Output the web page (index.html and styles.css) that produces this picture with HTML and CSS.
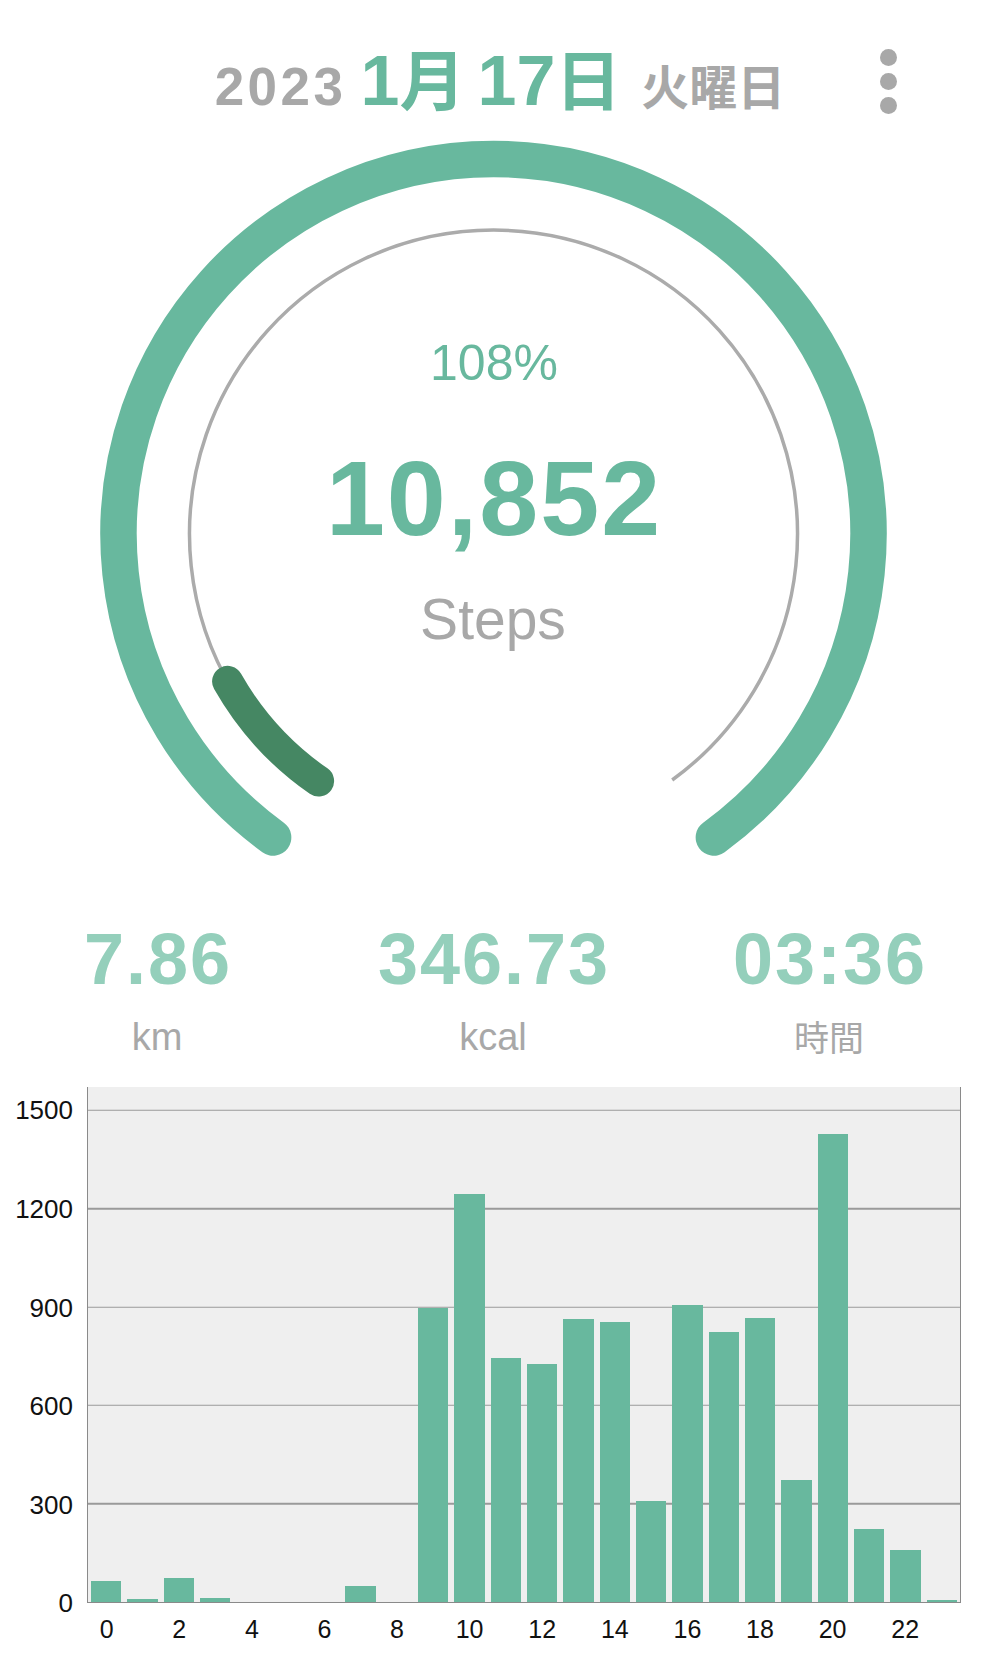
FILE: index.html
```html
<!DOCTYPE html>
<html lang="ja">
<head>
<meta charset="utf-8">
<title>Steps</title>
<link rel="stylesheet" href="styles.css">
</head>
<body>
<header class="header">
  <div class="date">
    <span class="year">2023</span>
    <span class="md"><span class="dn">1</span><span class="dk">月</span></span>
    <span class="md"><span class="dn">17</span><span class="dk">日</span></span>
    <span class="weekday">火曜日</span>
  </div>
  <button class="kebab" aria-label="menu"><i></i><i></i><i></i></button>
</header>

<section class="gauge">
  <svg class="gauge-svg" width="986" height="760" viewBox="0 0 986 760">
    <path d="M 273.1 707.4 A 375 375 0 1 1 713.9 707.4" fill="none" stroke="#68b89e" stroke-width="36.5" stroke-linecap="round"/>
    <path d="M 314.8 650 A 304 304 0 1 1 672.2 650" fill="none" stroke="#ababab" stroke-width="3.5"/>
    <path d="M 318.6 651.1 A 304 304 0 0 1 227.6 551.4" fill="none" stroke="#458763" stroke-width="31" stroke-linecap="round"/>
  </svg>
  <div class="gauge-text">
    <div class="pct">108%</div>
    <div class="steps">10,852</div>
    <div class="unit">Steps</div>
  </div>
</section>

<section class="stats">
  <div class="stat"><div class="val">7.86</div><div class="lbl">km</div></div>
  <div class="stat"><div class="val">346.73</div><div class="lbl">kcal</div></div>
  <div class="stat"><div class="val">03:36</div><div class="lbl cjk">時間</div></div>
</section>

<section class="chart">
  <div class="yaxis">
    <span class="ylab" style="bottom:95.45%">1500</span>
    <span class="ylab" style="bottom:76.36%">1200</span>
    <span class="ylab" style="bottom:57.27%">900</span>
    <span class="ylab" style="bottom:38.18%">600</span>
    <span class="ylab" style="bottom:19.09%">300</span>
    <span class="ylab" style="bottom:0%">0</span>
  </div>
  <div class="plot">
    <div class="grid" style="bottom:95.45%"></div>
    <div class="grid" style="bottom:76.36%"></div>
    <div class="grid" style="bottom:57.27%"></div>
    <div class="grid" style="bottom:38.18%"></div>
    <div class="grid" style="bottom:19.09%"></div>
    <div class="bars">
      <div class="slot"><div class="bar" style="height:4.14%"></div></div>
      <div class="slot"><div class="bar" style="height:0.51%"></div></div>
      <div class="slot"><div class="bar" style="height:4.65%"></div></div>
      <div class="slot"><div class="bar" style="height:0.70%"></div></div>
      <div class="slot"><div class="bar" style="height:0%"></div></div>
      <div class="slot"><div class="bar" style="height:0%"></div></div>
      <div class="slot"><div class="bar" style="height:0%"></div></div>
      <div class="slot"><div class="bar" style="height:3.05%"></div></div>
      <div class="slot"><div class="bar" style="height:0%"></div></div>
      <div class="slot"><div class="bar" style="height:57.08%"></div></div>
      <div class="slot"><div class="bar" style="height:79.31%"></div></div>
      <div class="slot"><div class="bar" style="height:47.30%"></div></div>
      <div class="slot"><div class="bar" style="height:46.15%"></div></div>
      <div class="slot"><div class="bar" style="height:55.00%"></div></div>
      <div class="slot"><div class="bar" style="height:54.36%"></div></div>
      <div class="slot"><div class="bar" style="height:19.67%"></div></div>
      <div class="slot"><div class="bar" style="height:57.67%"></div></div>
      <div class="slot"><div class="bar" style="height:52.39%"></div></div>
      <div class="slot"><div class="bar" style="height:55.13%"></div></div>
      <div class="slot"><div class="bar" style="height:23.68%"></div></div>
      <div class="slot"><div class="bar" style="height:90.91%"></div></div>
      <div class="slot"><div class="bar" style="height:14.19%"></div></div>
      <div class="slot"><div class="bar" style="height:10.18%"></div></div>
      <div class="slot"><div class="bar" style="height:0.45%"></div></div>
    </div>
  </div>
  <div class="xcorner"></div>
  <div class="xaxis">
    <span>0</span><span></span><span>2</span><span></span><span>4</span><span></span>
    <span>6</span><span></span><span>8</span><span></span><span>10</span><span></span>
    <span>12</span><span></span><span>14</span><span></span><span>16</span><span></span>
    <span>18</span><span></span><span>20</span><span></span><span>22</span><span></span>
  </div>
</section>
</body>
</html>
```
FILE: styles.css
```css
* { box-sizing: border-box; }
html, body {
  margin: 0;
  padding: 0;
  background: #ffffff;
}
body {
  width: 986px;
  font-family: "Liberation Sans", "Noto Sans CJK JP", sans-serif;
  color: #111;
}

/* ---------- header ---------- */
.header {
  position: relative;
  height: 130px;
  padding-top: 43px;
}
.date {
  display: flex;
  justify-content: center;
  align-items: baseline;
  line-height: 1;
  font-weight: bold;
  padding-left: 14px;
}
.year {
  font-size: 53px;
  letter-spacing: 3.5px;
  color: #a8a8a8;
  margin-right: 14px;
}
.md {
  color: #68b89e;
  margin-right: 12px;
}
.dn {
  font-family: "Liberation Sans", sans-serif;
  font-size: 70px;
}
.dk {
  font-family: "Noto Sans CJK JP", sans-serif;
  font-size: 66px;
  font-weight: bold;
}
.weekday {
  font-family: "Noto Sans CJK JP", sans-serif;
  font-size: 48px;
  font-weight: bold;
  color: #a8a8a8;
  margin-left: 8px;
}
.kebab {
  position: absolute;
  left: 880px;
  top: 49px;
  width: 17px;
  padding: 0;
  border: 0;
  background: none;
  display: flex;
  flex-direction: column;
  gap: 7px;
}
.kebab i {
  display: block;
  width: 17px;
  height: 17px;
  border-radius: 50%;
  background: #a8a8a8;
}

/* ---------- gauge ---------- */
.gauge {
  position: relative;
  height: 760px;
}
.gauge-svg {
  display: block;
}
.gauge-text {
  position: absolute;
  left: 0;
  right: 0;
  top: 208px;
  display: flex;
  flex-direction: column;
  align-items: center;
  line-height: 1;
}
.pct {
  font-size: 50px;
  color: #68b89e;
  padding-left: 2px;
}
.steps {
  margin-top: 57px;
  font-size: 106px;
  font-weight: bold;
  color: #68b89e;
  letter-spacing: 2px;
  padding-left: 2px;
}
.unit {
  margin-top: 40px;
  font-size: 57px;
  color: #a8a8a8;
}

/* ---------- stats ---------- */
.stats {
  display: grid;
  grid-template-columns: repeat(3, 336px);
  justify-content: center;
  margin-top: 33px;
}
.stat {
  display: flex;
  flex-direction: column;
  align-items: center;
  line-height: 1;
}
.val {
  font-size: 72px;
  font-weight: bold;
  color: #94cfbb;
  letter-spacing: 2px;
  padding-left: 2px;
}
.lbl {
  margin-top: 23px;
  font-size: 38px;
  color: #a8a8a8;
}
.lbl.cjk {
  font-family: "Noto Sans CJK JP", sans-serif;
  font-size: 35px;
}

/* ---------- chart ---------- */
.chart {
  display: grid;
  grid-template-columns: 87px 874px;
  grid-template-rows: 516px auto;
  margin-top: 31px;
}
.yaxis {
  position: relative;
}
.ylab {
  position: absolute;
  right: 14px;
  transform: translateY(50%);
  font-size: 26px;
  line-height: 1;
  color: #111;
}
.plot {
  position: relative;
  background: #efefef;
  border-left: 1.5px solid #8a8a8a;
  border-right: 1.5px solid #8a8a8a;
  border-bottom: 1.5px solid #8a8a8a;
}
.grid {
  position: absolute;
  left: 0;
  right: 0;
  height: 1.5px;
  background: #9a9a9a;
  transform: translateY(50%);
}
.bars {
  position: relative;
  height: 100%;
  display: flex;
  align-items: flex-end;
}
.slot {
  flex: 1 1 0;
  height: 100%;
  display: flex;
  align-items: flex-end;
  padding: 0 3px;
}
.bar {
  width: 100%;
  background: #68b89e;
}
.xaxis {
  display: flex;
  padding: 0 1.5px;
  margin-top: 14px;
}
.xaxis span {
  flex: 1 1 0;
  text-align: center;
  font-size: 25px;
  line-height: 1;
  color: #111;
}
```
